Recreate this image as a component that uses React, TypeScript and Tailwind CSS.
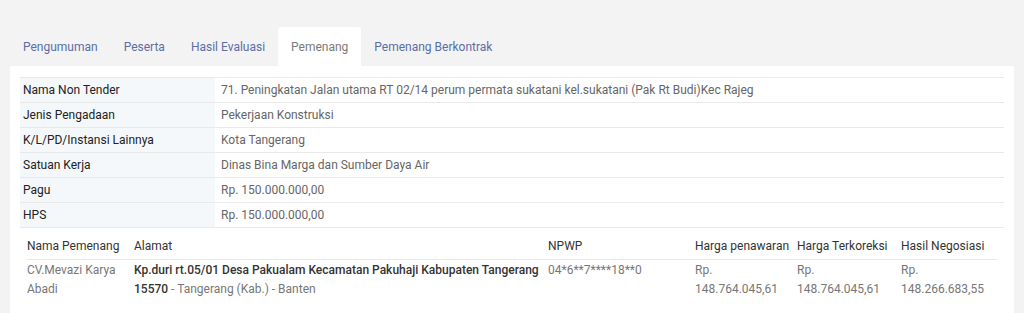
const tabs = ["Pengumuman", "Peserta", "Hasil Evaluasi", "Pemenang", "Pemenang Berkontrak"];

const details: [string, string][] = [
  ["Nama Non Tender", "71. Peningkatan Jalan utama RT 02/14 perum permata sukatani kel.sukatani (Pak Rt Budi)Kec Rajeg"],
  ["Jenis Pengadaan", "Pekerjaan Konstruksi"],
  ["K/L/PD/Instansi Lainnya", "Kota Tangerang"],
  ["Satuan Kerja", "Dinas Bina Marga dan Sumber Daya Air"],
  ["Pagu", "Rp. 150.000.000,00"],
  ["HPS", "Rp. 150.000.000,00"],
];

export default function App() {
  return (
    <div className="h-[313px] w-[1024px] overflow-hidden bg-[#f3f3f3] font-['Roboto',sans-serif] text-[12px]">
      <div className="flex pl-[10px] pt-[27px]">
        {tabs.map((t) => (
          <div
            key={t}
            className={
              t === "Pemenang"
                ? "flex h-[39px] items-center rounded-t-[3px] bg-white px-[13px] text-[#7a7a7a]"
                : "flex h-[39px] items-center px-[13px] text-[#5b6ea6]"
            }
          >
            {t}
          </div>
        ))}
      </div>
      <div className="mx-[10px] h-[260px] bg-white px-[10px] pt-[11px]">
        <div className="border-t border-[#e9e9e9]">
          {details.map(([label, value]) => (
            <div key={label} className="grid h-[25px] grid-cols-[195px_1fr] border-b border-[#e9e9e9]">
              <div className="flex items-center bg-[#f5f8fa] pl-[3px] text-[#222]">{label}</div>
              <div className="flex items-center pl-[6px] text-[#666]">{value}</div>
            </div>
          ))}
        </div>
        <div className="grid grid-cols-[107px_414px_147px_102px_104px_1fr] px-[7px]">
          <div className="col-span-6 grid grid-cols-subgrid border-b border-[#e9e9e9] pb-[4px] pt-[9px] text-[#333]">
            <div>Nama Pemenang</div>
            <div>Alamat</div>
            <div>NPWP</div>
            <div>Harga penawaran</div>
            <div>Harga Terkoreksi</div>
            <div>Hasil Negosiasi</div>
          </div>
          <div className="col-span-6 grid grid-cols-subgrid pt-[1px] leading-[19px] text-[#777]">
            <div className="pr-[10px]">CV.Mevazi Karya Abadi</div>
            <div className="pr-[6px]">
              <span className="font-medium text-[#333]">
                Kp.duri rt.05/01 Desa Pakualam Kecamatan Pakuhaji Kabupaten Tangerang 15570
              </span>
              <span> - Tangerang (Kab.) - Banten</span>
            </div>
            <div>04*6**7****18**0</div>
            <div className="pr-[12px]">Rp. 148.764.045,61</div>
            <div className="pr-[12px]">Rp. 148.764.045,61</div>
            <div className="pr-[12px]">Rp. 148.266.683,55</div>
          </div>
        </div>
      </div>
    </div>
  );
}
